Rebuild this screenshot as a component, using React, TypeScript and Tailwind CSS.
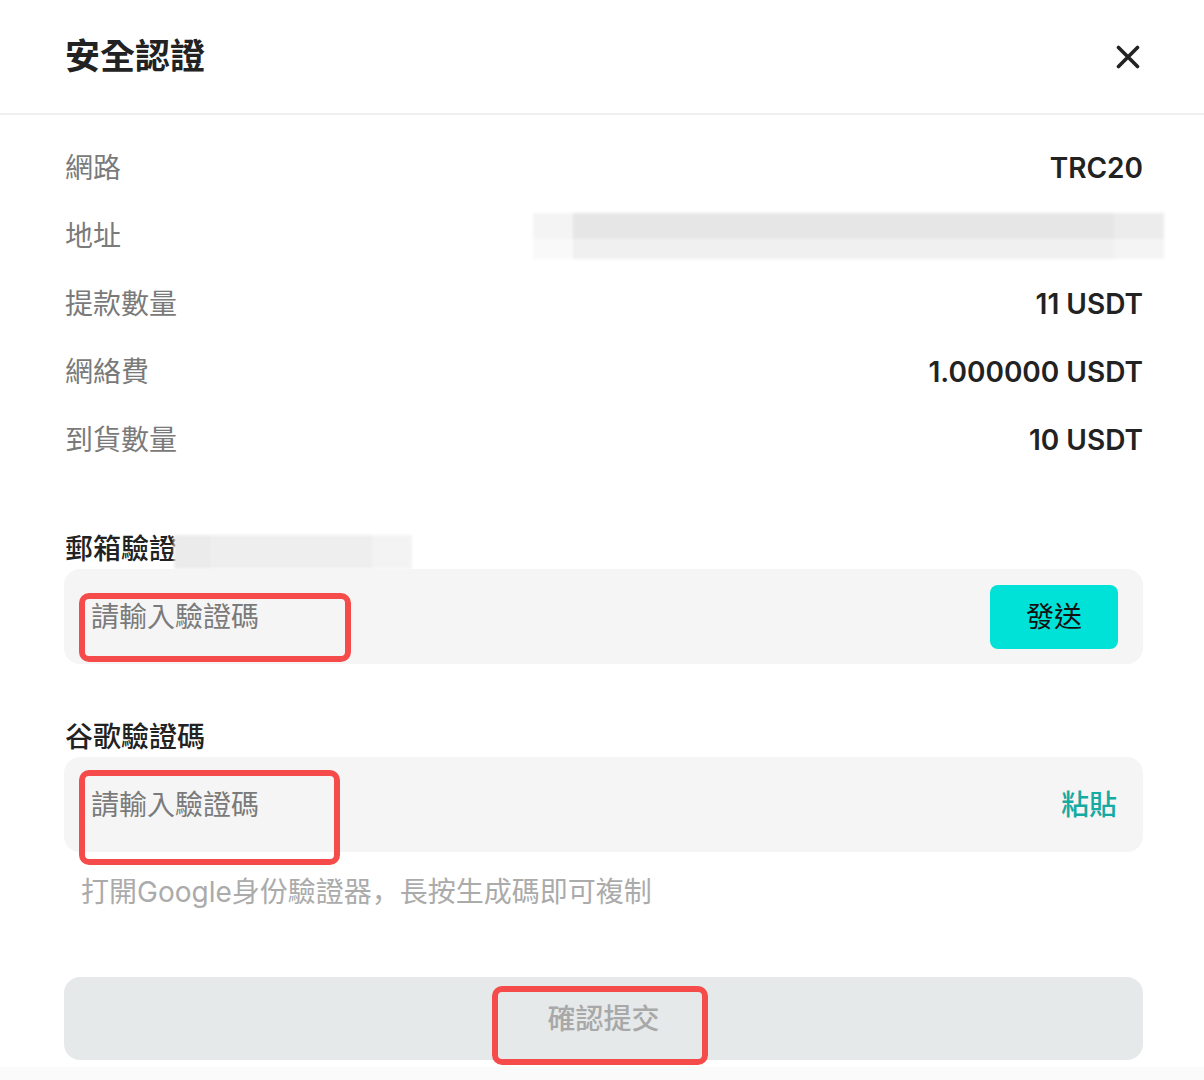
import React from 'react';

const font = { fontFamily: '"Inter", "Noto Sans CJK TC", sans-serif' };
const scFont = { fontFamily: '"Inter", "Noto Sans CJK SC", sans-serif' };

interface RowProps {
  label: string;
  value?: string;
  blurred?: boolean;
}

const InfoRow: React.FC<RowProps> = ({ label, value, blurred }) => (
  <div className="flex h-[68px] items-center justify-between">
    <span className="text-[28px] text-[#7a7a7a]">{label}</span>
    {blurred ? (
      <div className="mr-[-21px] flex h-[46px] w-[631px] flex-col blur-[1.5px]">
        <div className="flex h-[26px]">
          <div className="w-[40px] bg-[#f4f4f4]" />
          <div className="flex-1 bg-[#e6e6e6]" />
          <div className="w-[50px] bg-[#ececec]" />
        </div>
        <div className="flex h-[20px]">
          <div className="w-[40px] bg-[#f9f9f9]" />
          <div className="flex-1 bg-[#f0f0f0]" />
          <div className="w-[50px] bg-[#f4f4f4]" />
        </div>
      </div>
    ) : (
      <span className="text-[28px] font-semibold text-[#222]">{value}</span>
    )}
  </div>
);

const Mark: React.FC<{ className: string }> = ({ className }) => (
  <div className={`pointer-events-none absolute rounded-[10px] border-[6px] border-[#f54b4b] ${className}`} />
);

export default function App() {
  return (
    <div className="min-h-screen bg-[#fafafa]" style={font}>
      <div className="bg-white pb-[7px]">
        <div className="flex h-[115px] items-center justify-between border-b-2 border-[#efefef] pl-[65px] pr-[64px]">
          <h1 className="text-[35px] font-semibold text-[#222]">安全認證</h1>
          <svg width="24" height="24" viewBox="0 0 24 24" className="text-[#222]">
            <path d="M2.5 2.5 L21.5 21.5 M21.5 2.5 L2.5 21.5" stroke="currentColor" strokeWidth="3.6" strokeLinecap="round" />
          </svg>
        </div>

        <div className="pl-[64px] pr-[61px]">
          <div className="pt-[19px] pl-px">
            <InfoRow label="網路" value="TRC20" />
            <InfoRow label="地址" blurred />
            <InfoRow label="提款數量" value="11 USDT" />
            <InfoRow label="網絡費" value="1.000000 USDT" />
            <InfoRow label="到貨數量" value="10 USDT" />
          </div>

          <div className="mt-[55px] flex h-[40px] items-center pl-px">
            <span className="text-[28px] font-medium text-[#222]">郵箱驗證</span>
            <div className="ml-[-3px] flex h-[34px] w-[238px] self-end blur-[1.5px]">
              <div className="w-[36px] bg-[#ebebeb]" />
              <div className="flex-1 bg-[#eeeeee]" />
              <div className="w-[40px] bg-[#f3f3f3]" />
            </div>
          </div>
          <div className="relative flex h-[95px] items-center justify-between rounded-[16px] bg-[#f5f5f5] pl-[27px] pr-[25px]">
            <span className="text-[28px] text-[#7a7a7a]">請輸入驗證碼</span>
            <button className="flex h-[64px] w-[128px] items-center justify-center rounded-[8px] bg-[#00e2d8] text-[28px] text-[#111]">
              發送
            </button>
            <Mark className="left-[15px] top-[24px] h-[69px] w-[272px]" />
          </div>

          <div className="mt-[53px] flex h-[40px] items-center pl-px">
            <span className="text-[28px] font-medium text-[#222]">谷歌驗證碼</span>
          </div>
          <div className="relative flex h-[95px] items-center justify-between rounded-[16px] bg-[#f5f5f5] pl-[27px] pr-[26px]">
            <span className="text-[28px] text-[#7a7a7a]">請輸入驗證碼</span>
            <span className="text-[28px] font-medium text-[#16aaa2]">粘貼</span>
            <Mark className="left-[15px] top-[13px] h-[95px] w-[261px]" />
          </div>

          <p className="mt-[20px] flex h-[40px] items-center pl-[17px] text-[28px] text-[#ababab]" style={scFont}>
            打開Google身份驗證器，長按生成碼即可複制
          </p>

          <div className="relative mt-[65px] flex h-[83px] items-center justify-center rounded-[16px] bg-[#e6e9ea]">
            <span className="text-[28px] font-medium text-[#a8a8a8]">確認提交</span>
            <Mark className="left-[428px] top-[9px] h-[79px] w-[216px]" />
          </div>
        </div>
      </div>
    </div>
  );
}
